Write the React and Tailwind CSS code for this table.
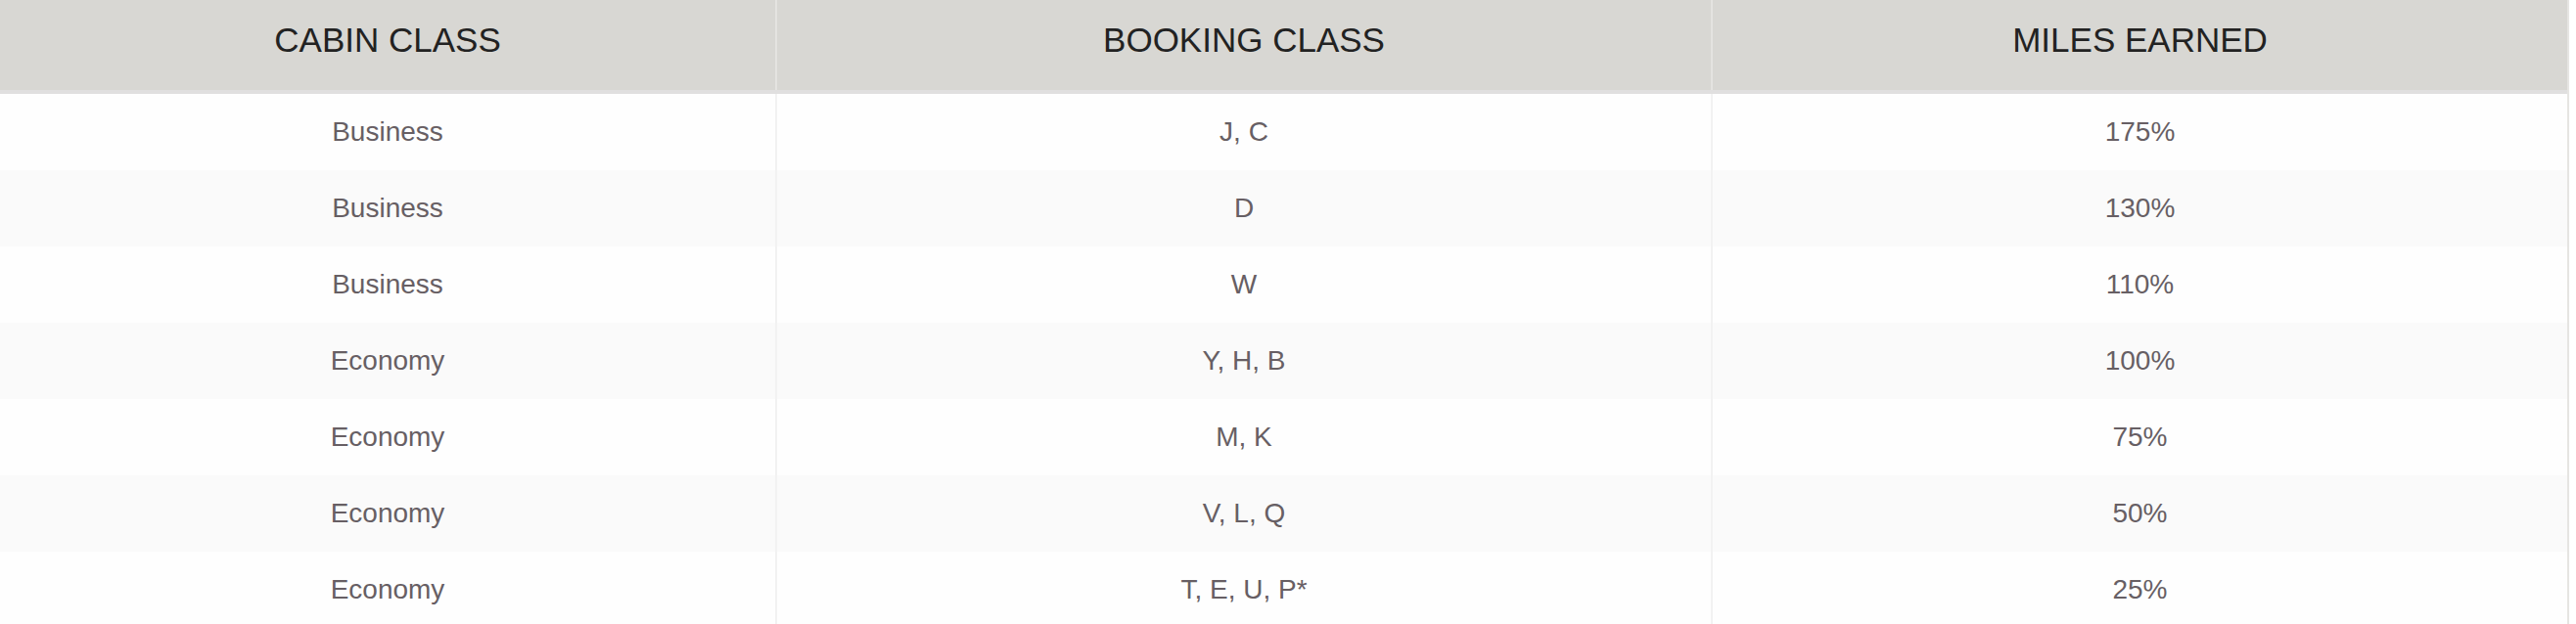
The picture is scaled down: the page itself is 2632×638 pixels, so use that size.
import React from "react";

const rows = [
  ["Business", "J, C", "175%"],
  ["Business", "D", "130%"],
  ["Business", "W", "110%"],
  ["Economy", "Y, H, B", "100%"],
  ["Economy", "M, K", "75%"],
  ["Economy", "V, L, Q", "50%"],
  ["Economy", "T, E, U, P*", "25%"],
];

export default function App() {
  return (
    <div
      className="w-[2632px] h-[638px] overflow-hidden bg-white"
      style={{ fontFamily: '"Liberation Sans", Arial, sans-serif' }}
    >
      <div className="w-[2625px] border-r-2 border-[#e6e5e2]">
        <div className="flex h-[96px] bg-[#d8d7d3] border-b-4 border-[#e0dfdf]">
          <div className="w-[794px] border-r-2 border-[#e4e3e0] flex items-center justify-center pb-[10px] text-[35px] text-[#222222]">
            CABIN CLASS
          </div>
          <div className="w-[956px] border-r-2 border-[#e4e3e0] flex items-center justify-center pb-[10px] text-[35px] text-[#222222]">
            BOOKING CLASS
          </div>
          <div className="flex-1 flex items-center justify-center pb-[10px] text-[35px] text-[#222222]">
            MILES EARNED
          </div>
        </div>
        {rows.map((r, i) => (
          <div
            key={i}
            className={`flex h-[78px] text-[28px] text-[#675f64] ${
              i % 2 === 0 ? "bg-[#fefefe]" : "bg-[#fafafa]"
            }`}
          >
            <div className="w-[794px] border-r-2 border-[#f2f2f2] flex items-center justify-center">
              {r[0]}
            </div>
            <div className="w-[956px] border-r-2 border-[#f2f2f2] flex items-center justify-center">
              {r[1]}
            </div>
            <div className="flex-1 flex items-center justify-center">{r[2]}</div>
          </div>
        ))}
      </div>
    </div>
  );
}
